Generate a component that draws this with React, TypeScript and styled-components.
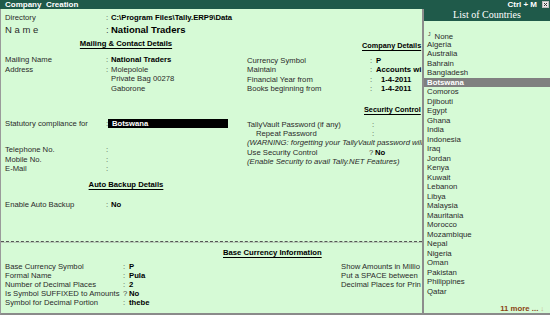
import React from "react";
import styled, { createGlobalStyle } from "styled-components";

const Global = createGlobalStyle`
  html, body { margin: 0; padding: 0; background: #d6fad6; }
  body { font-family: "Liberation Sans", Arial, sans-serif; }
`;

const Screen = styled.div`
  width: 550px;
  height: 315px;
  overflow: hidden;
  background: #d6fad6;
  font-family: "Liberation Sans", Arial, sans-serif;
  font-size: 7.7px;
  color: #222;
  display: flex;
  flex-direction: column;
`;

const TitleBar = styled.div`
  height: 9px;
  flex: none;
  background: #1f5a4a;
  color: #fff;
  font-weight: bold;
  font-size: 8px;
  line-height: 9px;
  display: flex;
  align-items: center;
  justify-content: space-between;
  padding: 0 1px 0 5px;
  white-space: pre;
`;

const TitleRight = styled.div`
  display: flex;
  align-items: center;
  gap: 5px;
`;

const Body = styled.div`
  flex: 1;
  display: flex;
  min-height: 0;
`;

const Viewport = styled.div`
  width: 422px;
  flex: none;
  overflow: hidden;
  box-sizing: border-box;
  border-left: 1px solid #9a9a9a;
  border-bottom: 2px solid #8a8a8a;
`;

const Form = styled.div`
  width: 421px;
  display: flex;
  flex-direction: column;
  padding-top: 3px;
`;

const Row = styled.div<{ $mt?: number; $h?: number; $pl?: number; $fs?: number }>`
  display: flex;
  align-items: center;
  flex: none;
  height: ${(p) => p.$h ?? 9.5}px;
  margin-top: ${(p) => p.$mt ?? 0}px;
  padding-left: ${(p) => p.$pl ?? 0}px;
  font-size: ${(p) => p.$fs ?? 7.7}px;
  white-space: nowrap;
`;

const Label = styled.span<{ $w: number; $indent?: number }>`
  flex: none;
  box-sizing: border-box;
  width: ${(p) => p.$w}px;
  padding-left: ${(p) => p.$indent ?? 0}px;
  color: #2a2a2a;
`;

const Sep = styled.span<{ $w?: number }>`
  flex: none;
  width: ${(p) => p.$w ?? 5}px;
  color: #444;
`;

const Value = styled.span<{ $indent?: number; $plain?: boolean }>`
  padding-left: ${(p) => p.$indent ?? 0}px;
  font-weight: ${(p) => (p.$plain ? "normal" : "bold")};
  color: ${(p) => (p.$plain ? "#2a2a2a" : "#000")};
`;

const InputBox = styled.span`
  display: flex;
  align-items: center;
  height: 9px;
  width: 120px;
  margin-left: -3px;
  padding-left: 4px;
  box-sizing: border-box;
  background: #000;
  color: #fff;
  font-weight: bold;
`;

const Heading = styled.div<{ $mt: number; $pl?: number; $fs?: number }>`
  flex: none;
  height: 10px;
  line-height: 10px;
  margin-top: ${(p) => p.$mt}px;
  padding-left: ${(p) => p.$pl ?? 0}px;
  text-align: ${(p) => (p.$pl !== undefined ? "left" : "center")};
  font-size: ${(p) => p.$fs ?? 7.7}px;
  font-weight: bold;
  color: #000;
  white-space: nowrap;
  span {
    text-decoration: underline;
    text-underline-offset: 1.5px;
  }
`;

const Note = styled.div`
  height: 9.5px;
  line-height: 9.5px;
  font-style: italic;
  color: #2a2a2a;
  white-space: nowrap;
`;

const TwoCol = styled.div`
  display: grid;
  grid-template-columns: 246px 175px;
  height: 204px;
  flex: none;
`;

const Col = styled.div<{ $pl: number }>`
  display: flex;
  flex-direction: column;
  padding-left: ${(p) => p.$pl}px;
  min-width: 0;
`;

const Divider = styled.div`
  flex: none;
  height: 0;
  border-top: 1px dashed #555;
  border-bottom: 1px solid #b9cdb9;
`;

const LowerHeading = styled(Heading)`
  padding-left: 0;
  padding-right: 0;
  margin-left: 0;
  width: 549px;
`;

const LowerGrid = styled.div`
  display: grid;
  grid-template-columns: 340px 81px;
`;

const Popup = styled.div`
  flex: 1;
  box-sizing: border-box;
  background: #d6fad6;
  border-left: 2px solid #8c8c8c;
  border-bottom: 2px solid #8a8a8a;
  display: flex;
  flex-direction: column;
  font-size: 7.8px;
`;

const PopupHeader = styled.div`
  height: 12px;
  flex: none;
  background: #1f5a4a;
  color: #fff;
  font-family: "Liberation Serif", "Times New Roman", serif;
  font-size: 10px;
  line-height: 12px;
  text-align: center;
`;

const List = styled.div`
  padding-top: 9px;
  display: flex;
  flex-direction: column;
`;

const Item = styled.div<{ $selected?: boolean }>`
  height: 9.5px;
  line-height: 9.5px;
  padding-left: 3px;
  white-space: nowrap;
  background: ${(p) => (p.$selected ? "#808080" : "transparent")};
  color: ${(p) => (p.$selected ? "#fff" : "#2a2a2a")};
  font-weight: ${(p) => (p.$selected ? "bold" : "normal")};
`;

const Mark = styled.span`
  font-size: 5px;
  vertical-align: 3px;
  margin: 0 4px 0 1px;
  color: #333;
`;

const More = styled.div`
  margin-top: auto;
  height: 8px;
  line-height: 8px;
  text-align: right;
  padding-right: 6px;
  font-weight: bold;
  color: #8b4513;
  white-space: pre;
`;

const MoreArrow = styled.span`
  color: #c8a880;
  font-weight: normal;
  font-size: 7px;
`;

const CloseIcon = () => (
  <svg width="7" height="7" viewBox="0 0 7 7">
    <rect x="0.5" y="0.5" width="6" height="6" fill="#e8e8e8" stroke="#bbb" />
    <path d="M2 2 L5 5 M5 2 L2 5" stroke="#333" strokeWidth="1" />
  </svg>
);

const countries = [
  "Algeria", "Australia", "Bahrain", "Bangladesh", "Botswana", "Comoros", "Djibouti",
  "Egypt", "Ghana", "India", "Indonesia", "Iraq", "Jordan", "Kenya", "Kuwait", "Lebanon",
  "Libya", "Malaysia", "Mauritania", "Morocco", "Mozambique", "Nepal", "Nigeria", "Oman",
  "Pakistan", "Philippines", "Qatar",
];

export default function App() {
  return (
    <>
      <Global />
      <Screen>
        <TitleBar>
          <span>{"Company  Creation"}</span>
          <TitleRight>
            <span>Ctrl + M</span>
            <CloseIcon />
          </TitleRight>
        </TitleBar>
        <Body>
          <Viewport>
            <Form>
              <Row $h={10} $pl={4}>
                <Label $w={101}>Directory</Label>
                <Sep>:</Sep>
                <Value>C:\Program Files\Tally.ERP9\Data</Value>
              </Row>
              <Row $h={15} $pl={4} $fs={9.5}>
                <Label $w={101}>N a m e</Label>
                <Sep>:</Sep>
                <Value>National Traders</Value>
              </Row>
              <TwoCol>
                <Col $pl={4}>
                  <Heading $mt={2}><span>Mailing &amp; Contact Details</span></Heading>
                  <Row $mt={6}>
                    <Label $w={101}>Mailing Name</Label>
                    <Sep>:</Sep>
                    <Value>National Traders</Value>
                  </Row>
                  <Row>
                    <Label $w={101}>Address</Label>
                    <Sep>:</Sep>
                    <Value $plain>Molepolole</Value>
                  </Row>
                  <Row>
                    <Label $w={101} />
                    <Sep />
                    <Value $plain>Private Bag 00278</Value>
                  </Row>
                  <Row>
                    <Label $w={101} />
                    <Sep />
                    <Value $plain>Gaborone</Value>
                  </Row>
                  <Row $mt={26}>
                    <Label $w={101}>Statutory compliance for</Label>
                    <Sep>:</Sep>
                    <InputBox>Botswana</InputBox>
                  </Row>
                  <Row $mt={16.5}>
                    <Label $w={101}>Telephone No.</Label>
                    <Sep>:</Sep>
                  </Row>
                  <Row>
                    <Label $w={101}>Mobile No.</Label>
                    <Sep>:</Sep>
                  </Row>
                  <Row>
                    <Label $w={101}>E-Mail</Label>
                    <Sep>:</Sep>
                  </Row>
                  <Heading $mt={6.5}><span>Auto Backup Details</span></Heading>
                  <Row $mt={9.25}>
                    <Label $w={101}>Enable Auto Backup</Label>
                    <Sep>:</Sep>
                    <Value>No</Value>
                  </Row>
                </Col>
                <Col $pl={0}>
                  <Heading $mt={4} $pl={115} $fs={7.3}><span>Company Details</span></Heading>
                  <Row $mt={4.25}>
                    <Label $w={123}>Currency Symbol</Label>
                    <Sep $w={6}>:</Sep>
                    <Value>P</Value>
                  </Row>
                  <Row>
                    <Label $w={123}>Maintain</Label>
                    <Sep $w={6}>:</Sep>
                    <Value>Accounts wi</Value>
                  </Row>
                  <Row>
                    <Label $w={123}>Financial Year from</Label>
                    <Sep $w={6}>:</Sep>
                    <Value $indent={5}>1-4-2011</Value>
                  </Row>
                  <Row>
                    <Label $w={123}>Books beginning from</Label>
                    <Sep $w={6}>:</Sep>
                    <Value $indent={5}>1-4-2011</Value>
                  </Row>
                  <Heading $mt={11.75} $pl={117} $fs={7.3}><span>Security Control</span></Heading>
                  <Row $mt={4.25}>
                    <Label $w={125}>TallyVault Password (if any)</Label>
                    <Sep>:</Sep>
                  </Row>
                  <Row>
                    <Label $w={125} $indent={9}>Repeat Password</Label>
                    <Sep>:</Sep>
                  </Row>
                  <Note>(WARNING: forgetting your TallyVault password will</Note>
                  <Row>
                    <Label $w={122}>Use Security Control</Label>
                    <Sep $w={6}>?</Sep>
                    <Value>No</Value>
                  </Row>
                  <Note>(Enable Security to avail Tally.NET Features)</Note>
                </Col>
              </TwoCol>
              <Divider />
              <Heading $mt={4.5} $pl={222}><span>Base Currency Information</span></Heading>
              <LowerGrid>
                <Col $pl={4}>
                  <Row $mt={4.5} $h={9}>
                    <Label $w={118}>Base Currency Symbol</Label>
                    <Sep $w={6}>:</Sep>
                    <Value>P</Value>
                  </Row>
                  <Row $h={9}>
                    <Label $w={118}>Formal Name</Label>
                    <Sep $w={6}>:</Sep>
                    <Value>Pula</Value>
                  </Row>
                  <Row $h={9}>
                    <Label $w={118}>Number of Decimal Places</Label>
                    <Sep $w={6}>:</Sep>
                    <Value>2</Value>
                  </Row>
                  <Row $h={9}>
                    <Label $w={118}>Is Symbol SUFFIXED to Amounts</Label>
                    <Sep $w={6}>?</Sep>
                    <Value>No</Value>
                  </Row>
                  <Row $h={9}>
                    <Label $w={118}>Symbol for Decimal Portion</Label>
                    <Sep $w={6}>:</Sep>
                    <Value>thebe</Value>
                  </Row>
                </Col>
                <Col $pl={0}>
                  <Row $mt={4} $h={9}>
                    <Label $w={80}>Show Amounts in Millio</Label>
                  </Row>
                  <Row $h={9}>
                    <Label $w={80}>Put a SPACE between</Label>
                  </Row>
                  <Row $h={9}>
                    <Label $w={80}>Decimal Places for Prin</Label>
                  </Row>
                </Col>
              </LowerGrid>
            </Form>
          </Viewport>
          <Popup>
            <PopupHeader>List of Countries</PopupHeader>
            <List>
              <Item>
                <Mark>J</Mark>None
              </Item>
              {countries.map((c) => (
                <Item key={c} $selected={c === "Botswana"}>
                  {c}
                </Item>
              ))}
            </List>
            <More>
              {"11 more ... "}
              <MoreArrow>↓</MoreArrow>
            </More>
          </Popup>
        </Body>
      </Screen>
    </>
  );
}
